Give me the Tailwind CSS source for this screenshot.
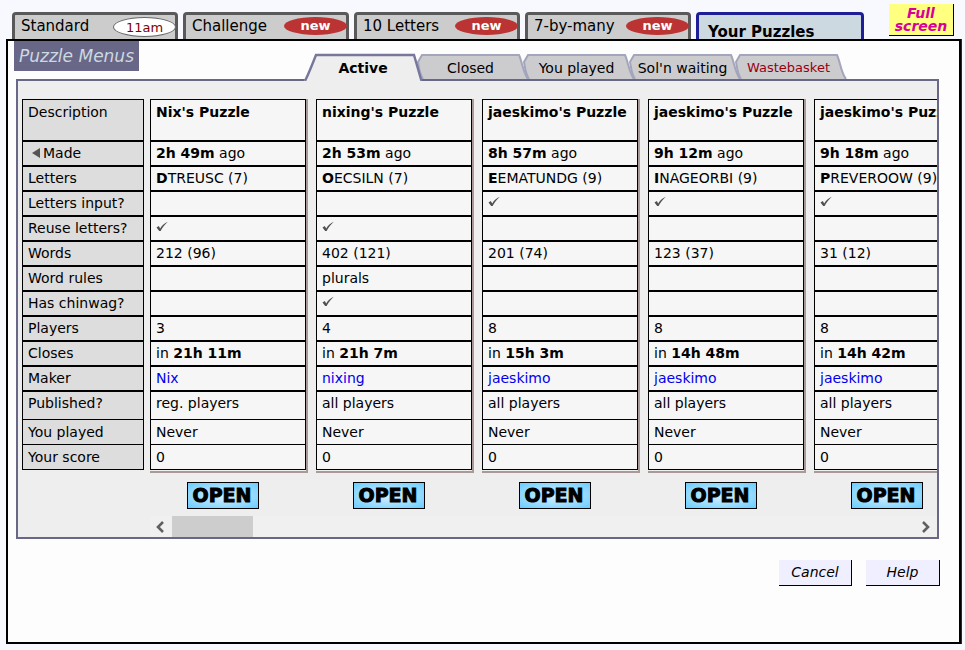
<!DOCTYPE html>
<html lang="en">

<head>
  <meta charset="UTF-8" />
  <meta name="viewport" content="width=device-width, initial-scale=1.0" />
  <title>Your Puzzles</title>
  <script src="https://cdn.jsdelivr.net/npm/@tailwindcss/browser@4"></script>
</head>

<body class="bg-[#f8f9ff] text-black text-[14px] font-['Verdana','DejaVu_Sans',sans-serif]">
  <div class="pl-[6px] pr-[3px]">
    <!-- Game tabs -->
    <header class="flex items-end justify-between pl-[6px] pr-[8px] pt-[4px]">
      <nav class="flex gap-[5px] text-[15px] leading-[22px]">
        <button type="button" class="w-[166px] h-[27px] flex justify-between border-3 border-b-0 border-[#595959] rounded-t-[4px] bg-[#ccc] pl-[6px]">
          Standard
          <span class="w-[63px] h-[20px] mt-[2px] -mr-[1px] border border-[#666] rounded-[50%] bg-white text-[#800000] text-[13px] leading-[20px]">11am</span>
        </button>
        <button type="button" class="w-[166px] h-[27px] flex justify-between border-3 border-b-0 border-[#595959] rounded-t-[4px] bg-[#ccc] pl-[6px]">
          Challenge
          <span class="w-[63px] h-[18px] mt-[2px] -mr-[1px] rounded-[50%] bg-[#b33] text-white text-[13px] font-bold leading-[17px]">new</span>
        </button>
        <button type="button" class="w-[166px] h-[27px] flex justify-between border-3 border-b-0 border-[#595959] rounded-t-[4px] bg-[#ccc] pl-[6px]">
          10 Letters
          <span class="w-[63px] h-[18px] mt-[2px] -mr-[1px] rounded-[50%] bg-[#b33] text-white text-[13px] font-bold leading-[17px]">new</span>
        </button>
        <button type="button" class="w-[166px] h-[27px] flex justify-between border-3 border-b-0 border-[#595959] rounded-t-[4px] bg-[#ccc] pl-[6px]">
          7-by-many
          <span class="w-[63px] h-[18px] mt-[2px] -mr-[1px] rounded-[50%] bg-[#b33] text-white text-[13px] font-bold leading-[17px]">new</span>
        </button>
        <button type="button" class="w-[168px] h-[27px] pt-[6px] border-3 border-b-0 border-[#1e1e96] rounded-t-[4px] bg-[#ccd9e0] pl-[9px] text-left font-bold text-[15px] leading-[22px]">Your Puzzles</button>
      </nav>
      <button type="button" class="w-[65px] h-[32px] mb-[3px] border-r border-b border-black bg-[#ffff80] text-[#d8009a] font-bold italic leading-[13px]">Full<br>screen</button>
    </header>

    <div class="border-r border-[#1e1e96]">
      <main class="border-2 border-black bg-[#fdfdfd] pl-[6px] pr-[20px] pb-[56px]">
        <div class="flex items-start">
          <h1 class="w-[125px] h-[30px] bg-[#696788] text-[#ccd9e0] text-[17px] italic leading-[31px] text-center">Puzzle Menus</h1>
          <!-- Puzzle list tabs -->
          <nav class="flex pl-[165px] pt-[12px]" id="tabs"></nav>
        </div>

        <section class="ml-[2px] -mt-[2px] border-2 border-[#696788] bg-[#eee] flex pl-[4px] pt-[18px]">
          <table class="w-[122px] shrink-0 self-start border-separate border-spacing-0 leading-[22px]">
            <tbody id="labels"></tbody>
          </table>
          <div class="ml-[6px] flex-1 min-w-0">
            <div class="flex gap-[8px] overflow-hidden" id="puzzles"></div>
            <!-- Scroll bar -->
            <div class="mt-[7px] h-[21px] flex items-center justify-between bg-[#f0f0f0]">
              <div class="flex items-center">
                <button type="button" aria-label="Scroll left" class="w-[22px] h-[21px] flex items-center justify-center">
                  <svg class="w-[10px] h-[12px] mr-[4px]" viewBox="0 0 10 12"><path d="M9 1 L4 6 L9 11" fill="none" stroke="#606060" stroke-width="2.6" /></svg>
                </button>
                <div class="w-[81px] h-[21px] bg-[#cdcdcd]"></div>
              </div>
              <button type="button" aria-label="Scroll right" class="w-[22px] h-[21px] flex items-center justify-center">
                <svg class="w-[10px] h-[12px]" viewBox="0 0 10 12"><path d="M2 1 L7 6 L2 11" fill="none" stroke="#606060" stroke-width="2.6" /></svg>
              </button>
            </div>
          </div>
        </section>

        <div class="flex justify-end gap-[14px] mt-[21px] -mr-[1px] italic">
          <button type="button" class="w-[73px] h-[26px] border-r border-b border-black bg-[#efefff]">Cancel</button>
          <button type="button" class="w-[74px] h-[26px] border-r border-b border-black bg-[#efefff]">Help</button>
        </div>
      </main>
    </div>
  </div>

  <script>
    const tabs = ['Active', 'Closed', 'You played', "Sol'n waiting", 'Wastebasket'];

    const labels = ['Description', 'Made', 'Letters', 'Letters input?', 'Reuse letters?', 'Words', 'Word rules',
      'Has chinwag?', 'Players', 'Closes', 'Maker', 'Published?', 'You played', 'Your score'];

    const tick = '<svg class="w-[12px] h-[12px] mt-[4px]" viewBox="0 0 12 12"><path d="M0.5 6.4 L2.8 5 L4.2 7.4 C6 4.6 8.4 2.2 11.8 0.8 C8.6 3.8 6.4 6.6 4.6 10 L3.2 10 Z" fill="#505050" /></svg>';
    const arrow = '<svg class="inline-block w-[8px] h-[10px] ml-[4px] mr-[3px] align-baseline" viewBox="0 0 8 10"><path d="M8 0 V10 L0 5 Z" fill="#555" /></svg>';

    // name, made, first letter, other letters, input, reuse, words, rules, chinwag, players, closes, maker, published
    const puzzles = [
      ["Nix's Puzzle", '2h 49m', 'D', 'TREUSC (7)', 0, 1, '212 (96)', '', 0, 3, '21h 11m', 'Nix', 'reg. players'],
      ["nixing's Puzzle", '2h 53m', 'O', 'ECSILN (7)', 0, 1, '402 (121)', 'plurals', 1, 4, '21h 7m', 'nixing', 'all players'],
      ["jaeskimo's Puzzle", '8h 57m', 'E', 'EMATUNDG (9)', 1, 0, '201 (74)', '', 0, 8, '15h 3m', 'jaeskimo', 'all players'],
      ["jaeskimo's Puzzle", '9h 12m', 'I', 'NAGEORBI (9)', 1, 0, '123 (37)', '', 0, 8, '14h 48m', 'jaeskimo', 'all players'],
      ["jaeskimo's Puzzle", '9h 18m', 'P', 'REVEROOW (9)', 1, 0, '31 (12)', '', 0, 8, '14h 42m', 'jaeskimo', 'all players'],
    ];

    // the last two rows share their top line with the row above
    function rowClass(i) {
      if (i == 0) return 'h-[42px] pt-[1px] border';
      if (i == 11) return 'h-[29px] border';
      if (i > 11) return 'h-[25px] pt-[1px] border border-t-0';
      return 'h-[25px] border';
    }

    document.getElementById('labels').innerHTML = labels.map((text, i) =>
      `<tr><th scope="row" class="${rowClass(i)} border-black bg-[#ddd] pl-[5px] text-left align-top font-normal whitespace-nowrap">${i == 1 ? arrow : ''}${text}</th></tr>`
    ).join('');

    document.getElementById('puzzles').innerHTML = puzzles.map(p => {
      const cells = [`<b>${p[0]}</b>`, `<b>${p[1]}</b> ago`, `<b>${p[2]}</b>${p[3]}`, p[4] ? tick : '', p[5] ? tick : '',
        p[6], p[7], p[8] ? tick : '', p[9], `in <b>${p[10]}</b>`,
        `<a href="#" class="text-[#0000ee]">${p[11]}</a>`, p[12], 'Never', '0'];
      return `<div class="shrink-0">
        <div class="pb-[1px] border-r-2 border-b-2 border-[#a99]">
          <table class="w-[156px] border-separate border-spacing-0 leading-[22px]">
            ${cells.map((c, i) => `<tr><td class="${rowClass(i)} border-black bg-[#f6f6f6] pl-[5px] align-top whitespace-nowrap">${c}</td></tr>`).join('')}
          </table>
        </div>
        <button type="button" class="block w-[72px] h-[27px] ml-[37px] mt-[9px] pr-[2px] border border-black bg-radial from-[#d8f0ff] to-[#6cf] text-[19px] font-bold leading-[25px] [-webkit-text-stroke:1px_black]">OPEN</button>
      </div>`;
    }).join('');

    // each tab is drawn over the right edge of the one before it
    document.getElementById('tabs').innerHTML = tabs.map((name, i) => {
      if (i == 0) return `<button type="button" class="relative z-10 w-[118px] h-[28px] font-bold leading-[30px]">
        <svg class="absolute inset-0 w-[118px] h-[28px]" viewBox="0 0 118 28"><path d="M0 28 Q6 18 11 2 H110 L118 28 Z" fill="#eee" /><path d="M1 28 C5 20 8 12 12 2 H110 L117.5 28" fill="none" stroke="#77779c" stroke-width="2.4" /></svg>
        <span class="relative">${name}</span></button>`;
      return `<button type="button" class="relative w-[106px] h-[26px] pr-[9px] leading-[30px] whitespace-nowrap ${i == 4 ? 'text-[#990010] text-[13px]' : ''}">
        <svg class="absolute left-[-5px] top-0 w-[114px] h-[26px]" viewBox="0 0 114 26"><path d="M6 26 C2 20 2 13 1 9 L5 2 H102 C105 8 106 20 111 26 Z" fill="#cccccf" /><path d="M6 26 C2 20 2 13 1 9 L5 2 H102 C105 8 106 20 111 26" fill="none" stroke="#a3a5bd" stroke-width="2" /></svg>
        <span class="relative">${name}</span></button>`;
    }).join('');
  </script>
</body>

</html>
